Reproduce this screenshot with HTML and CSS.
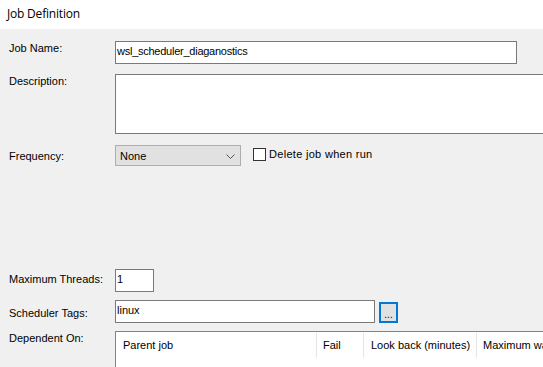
FILE: index.html
```html
<!DOCTYPE html>
<html>
<head>
<meta charset="utf-8">
<link rel="stylesheet" href="styles.css">
</head>
<body>
<div class="page">
  <div class="title">Job Definition</div>
  <div class="form">
    <div class="row row-name">
      <div class="label lab-1">Job Name:</div>
      <div class="textbox tb-name">wsl_scheduler_diaganostics</div>
    </div>
    <div class="row row-desc">
      <div class="label lab-1">Description:</div>
      <div class="textarea"></div>
    </div>
    <div class="row row-freq">
      <div class="label lab-5">Frequency:</div>
      <div class="select">
        <span class="select-text">None</span>
        <svg class="chev" width="9" height="5" viewBox="0 0 9 5"><path d="M0.5 0.5 L4.5 4.5 L8.5 0.5" fill="none" stroke="#555" stroke-width="1"/></svg>
      </div>
      <label class="check">
        <span class="box"></span>
        <span class="check-text">Delete job when run</span>
      </label>
    </div>
    <div class="row row-threads">
      <div class="label lab-4">Maximum Threads:</div>
      <div class="textbox tb-threads">1</div>
    </div>
    <div class="row row-tags">
      <div class="label lab-7">Scheduler Tags:</div>
      <div class="textbox tb-tags">linux</div>
      <div class="dots">...</div>
    </div>
    <div class="row row-dep">
      <div class="label lab-1">Dependent On:</div>
      <div class="grid">
        <div class="grid-head">
          <div class="col col-parent">Parent job</div>
          <div class="col col-fail">Fail</div>
          <div class="col col-look">Look back (minutes)</div>
          <div class="col col-max">Maximum wait</div>
        </div>
      </div>
    </div>
  </div>
</div>
</body>
</html>
```

FILE: styles.css
```css
html, body {
  margin: 0;
  padding: 0;
}
body {
  width: 543px;
  height: 367px;
  overflow: hidden;
  background: #f0f0f0;
  font-family: "Liberation Sans", Arial, sans-serif;
  font-size: 11px;
  color: #000;
}
.page {
  width: 543px;
  height: 367px;
  overflow: hidden;
}
.title {
  height: 29px;
  box-sizing: border-box;
  background: #fff;
  padding: 5px 0 0 7px;
  font-family: "Open Sans", "Noto Sans", sans-serif;
  font-size: 12px;
  line-height: 18px;
  letter-spacing: -0.2px;
}
.form {
  padding-top: 12px;
}
.row {
  display: flex;
  align-items: flex-start;
}
.label {
  width: 106px;
  padding-left: 9px;
  line-height: 13px;
  white-space: nowrap;
  flex: none;
}
.lab-1 { padding-top: 1px; }
.lab-4 { padding-top: 4px; }
.lab-5 { padding-top: 5px; }
.lab-7 { padding-top: 7px; }

.row-desc { margin-top: 10px; }
.row-freq { margin-top: 11px; }
.row-threads { margin-top: 103px; }
.row-tags { margin-top: 8px; }
.row-dep { margin-top: 8px; }

.textbox {
  box-sizing: border-box;
  height: 23px;
  border: 1px solid #7a7a7a;
  background: #fff;
  padding: 3px 1px 0 1px;
  line-height: 13px;
  white-space: nowrap;
  flex: none;
}
.tb-name { width: 402px; letter-spacing: -0.25px; }
.tb-threads { width: 39px; }
.tb-tags { width: 260px; }

.textarea {
  box-sizing: border-box;
  width: 440px;
  height: 60px;
  border: 1px solid #7a7a7a;
  background: #fff;
  flex: none;
}

.select {
  box-sizing: border-box;
  width: 126px;
  height: 21px;
  border: 1px solid #adadad;
  background: #e1e1e1;
  display: flex;
  align-items: flex-start;
  justify-content: space-between;
  padding: 4px 5px 0 4px;
  line-height: 13px;
  flex: none;
}
.chev {
  margin-top: 4px;
}
.check {
  display: flex;
  align-items: flex-start;
  margin-left: 12px;
  margin-top: 3px;
}
.box {
  box-sizing: border-box;
  width: 13px;
  height: 13px;
  border: 1px solid #333;
  background: #fff;
  flex: none;
}
.check-text {
  margin-left: 3px;
  line-height: 13px;
  letter-spacing: 0.3px;
}

.dots {
  box-sizing: border-box;
  width: 19px;
  height: 21px;
  margin-top: 2px;
  margin-left: 4px;
  border: 2px solid #0078d7;
  background: #e1e1e1;
  text-align: center;
  line-height: 21px;
  font-size: 10px;
  flex: none;
}

.grid {
  box-sizing: border-box;
  width: 440px;
  height: 60px;
  border: 1px solid #828282;
  background: #fff;
  flex: none;
  overflow: hidden;
}
.grid-head {
  display: flex;
  height: 25px;
  margin-top: 1px;
}
.col {
  box-sizing: border-box;
  border-right: 1px solid #e5e5e5;
  padding: 6px 0 0 7px;
  line-height: 13px;
  white-space: nowrap;
  flex: none;
}
.col-parent { width: 201px; }
.col-fail { width: 47px; padding-left: 6px; }
.col-look { width: 113px; }
.col-max { width: 120px; padding-left: 6px; border-right: none; }
```
